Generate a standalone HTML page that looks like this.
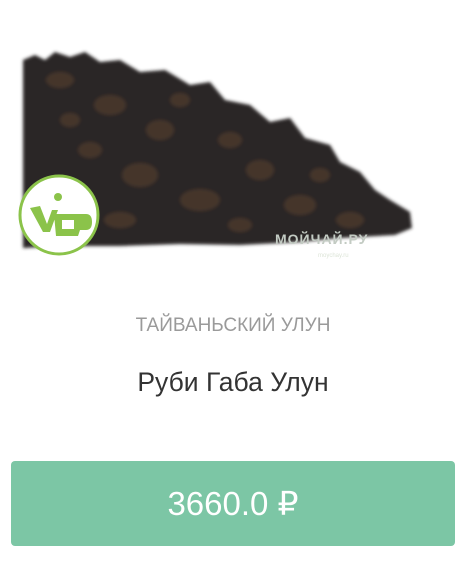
<!DOCTYPE html>
<html><head><meta charset="utf-8"><style>
body{margin:0;width:466px;height:573px;background:#fff;position:relative;overflow:hidden;font-family:"Liberation Sans","DejaVu Sans",sans-serif}
.cat{position:absolute;top:315px;left:0;width:466px;text-align:center;color:#9a9a9a;font-size:19px;letter-spacing:0}
.title{position:absolute;top:367px;left:0;width:466px;text-align:center;color:#333;font-size:26.5px}
.btn{position:absolute;left:11px;top:461px;width:444px;height:85px;background:#7cc6a5;border-radius:4px;color:#fff;font-size:33px;text-align:center;line-height:85px}
</style></head><body>
<svg width="466" height="300" style="position:absolute;left:0;top:0">
<defs><filter id="b"><feGaussianBlur stdDeviation="1.5"/></filter></defs>
<g filter="url(#b)">
<path d="M23 60 L35 55 L45 60 L55 52 L70 57 L85 52 L100 62 L120 60 L140 72 L165 70 L190 85 L210 82 L225 100 L250 105 L270 122 L290 118 L305 138 L330 145 L340 162 L360 172 L375 190 L390 200 L410 212 L412 228 L395 235 L340 238 L300 242 L240 245 L180 244 L120 246 L60 246 L23 248 Z" fill="#2a2626"/>
<g fill="#4d3b2e" opacity="0.75">
<ellipse cx="60" cy="80" rx="14" ry="8"/><ellipse cx="110" cy="105" rx="16" ry="10"/><ellipse cx="160" cy="130" rx="14" ry="10"/>
<ellipse cx="140" cy="175" rx="18" ry="12"/><ellipse cx="200" cy="200" rx="20" ry="11"/><ellipse cx="260" cy="170" rx="14" ry="10"/>
<ellipse cx="300" cy="205" rx="16" ry="10"/><ellipse cx="350" cy="220" rx="14" ry="8"/><ellipse cx="90" cy="150" rx="12" ry="8"/>
<ellipse cx="230" cy="140" rx="12" ry="8"/><ellipse cx="120" cy="220" rx="16" ry="8"/><ellipse cx="180" cy="100" rx="10" ry="7"/>
<ellipse cx="70" cy="120" rx="10" ry="7"/><ellipse cx="320" cy="175" rx="10" ry="7"/><ellipse cx="240" cy="225" rx="12" ry="7"/></g>
</g>
<text x="275" y="244" font-size="14" font-weight="bold" fill="#c3cbc3" font-family="Liberation Sans" letter-spacing="1">МОЙЧАЙ.РУ</text>
<text x="318" y="257" font-size="6" fill="#dde5d8" font-family="Liberation Sans">moychay.ru</text>
<circle cx="59" cy="215" r="39" fill="#fff" stroke="#8bc34a" stroke-width="3"/>
<g fill="#8bc34a">
<path d="M30 208 L40 206 L47 224 L52 210 L58 210 L50 232 L43 232 Z"/>
<path d="M54 214 L86 214 Q92 214 92 222 Q92 230 86 230 L80 230 L78 236 L56 236 Z" />
<circle cx="58" cy="197" r="4"/>
</g>
<path d="M62 220 L74 220 L74 229 L62 229 Z" fill="#fff"/>
</svg>
<div class="cat">ТАЙВАНЬСКИЙ УЛУН</div>
<div class="title">Руби Габа Улун</div>
<div class="btn">3660.0 ₽</div>
</body></html>
